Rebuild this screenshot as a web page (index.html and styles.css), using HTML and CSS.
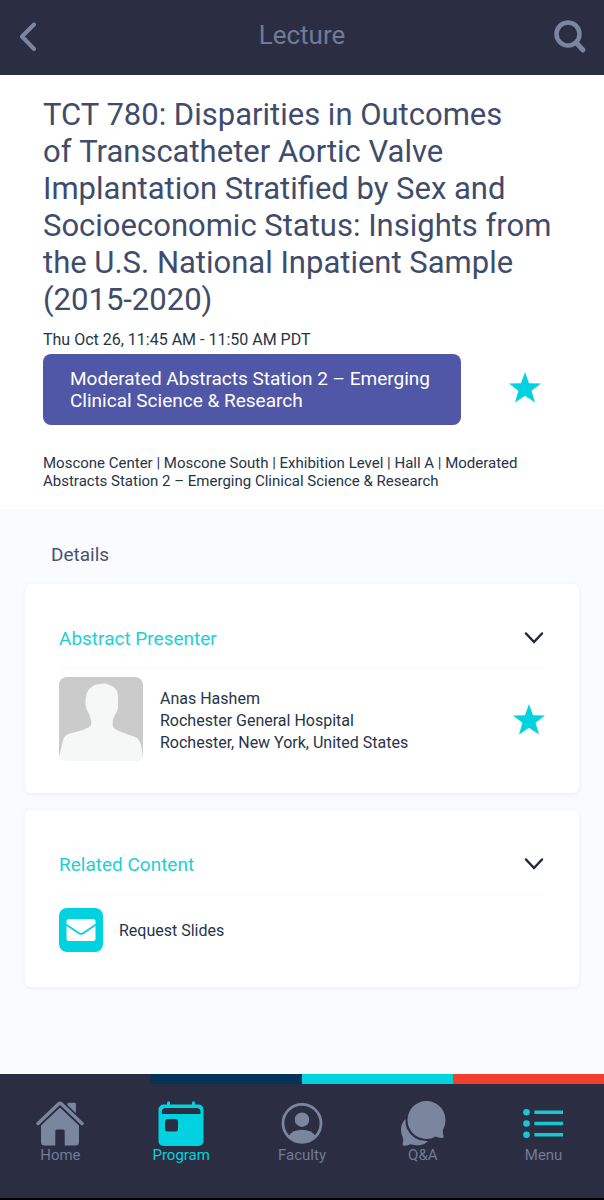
FILE: index.html
```html
<!DOCTYPE html>
<html lang="en">
<head>
  <meta charset="UTF-8" />
  <meta name="viewport" content="width=device-width, initial-scale=1.0"/>
  <title>Lecture</title>
  <link rel="stylesheet" href="styles.css">
</head>
<body>
  <header class="topbar">
    <button class="icon-btn" aria-label="Back">
      <svg width="20" height="32" viewBox="0 0 20 32" fill="none" stroke="currentColor" stroke-width="4" stroke-linecap="round" stroke-linejoin="round"><path d="M17 2.500 5 14.500l12 12.500"/></svg>
    </button>
    <h1 class="topbar-title">Lecture</h1>
    <button class="icon-btn" aria-label="Search">
      <svg width="34" height="36" viewBox="0 -2 34 36" fill="none" stroke="currentColor" stroke-linecap="round"><circle cx="15" cy="12" r="11.500" stroke-width="4.500"/><path d="m23.500 21 6.500 7" stroke-width="5"/></svg>
    </button>
  </header>

  <main class="content">
    <section class="lecture">
      <h2 class="lecture-title">TCT 780: Disparities in Outcomes of&nbsp;Transcatheter Aortic Valve Implantation Stratified by Sex and Socioeconomic Status: Insights from the U.S. National Inpatient Sample (2015-2020)</h2>
      <p class="lecture-time">Thu Oct 26, 11:45 AM - 11:50 AM PDT</p>
      <div class="session">
        <a class="session-link" href="#">Moderated Abstracts Station 2 – Emerging Clinical Science &amp; Research</a>
        <button class="star-btn" aria-label="Favorite lecture">
          <svg width="32" height="31" viewBox="0 0 32 31" fill="currentColor"><path d="M16 0 20 11.2 32 11.5 22.6 18.8 26 30.5 16 23.8 6 30.5 9.4 18.8 0 11.5 12 11.2z"/></svg>
        </button>
      </div>
      <p class="lecture-place">Moscone Center | Moscone South | Exhibition Level | Hall A | Moderated Abstracts Station 2 – Emerging Clinical Science &amp; Research</p>
    </section>

    <section class="details">
      <h3 class="details-title">Details</h3>

      <article class="card">
        <button class="card-head" aria-expanded="true">
          Abstract Presenter
          <svg class="chevron" width="22" height="14" viewBox="0 0 22 14"><path d="m3 2.500 8 8.500 8-8.500"/></svg>
        </button>
        <div class="presenter">
          <svg class="avatar" width="84" height="84" viewBox="0 0 84 84" role="img" aria-label="Anas Hashem">
            <rect width="84" height="84" fill="#cbcbcb"/>
            <path fill="#f6f8f8" d="M0 84C1 76 3 66 5 61c1-3 4-4 8-5 8-2 18-5 19-8 1-4-1-9-3-13-3-5-3-10-2-15C28 11 35 7 42 7c4-1 7 0 8 1 6 1 9 6 9 12v10c0 5-4 8-5 13-1 6 0 8 4 10 7 4 15 5 20 8 4 3 6 14 6 23z"/>
          </svg>
          <p class="presenter-info">Anas Hashem<br>Rochester General Hospital<br>Rochester, New York, United States</p>
          <button class="star-btn" aria-label="Favorite presenter">
            <svg width="32" height="31" viewBox="0 0 32 31" fill="currentColor"><path d="M16 0 20 11.2 32 11.5 22.6 18.8 26 30.5 16 23.8 6 30.5 9.4 18.8 0 11.5 12 11.2z"/></svg>
          </button>
        </div>
      </article>

      <article class="card">
        <button class="card-head" aria-expanded="true">
          Related Content
          <svg class="chevron" width="22" height="14" viewBox="0 0 22 14"><path d="m3 2.500 8 8.500 8-8.500"/></svg>
        </button>
        <a class="related" href="#">
          <svg width="44" height="44" viewBox="0 0 44 44">
            <rect width="44" height="44" rx="8" fill="#00d3df"/>
            <rect x="7.500" y="11" width="29" height="22" rx="2.500" fill="#fff"/>
            <path d="m7 16.500 12.500 8.500q2.500 1.600 5 0L37 16.500" fill="none" stroke="#00d3df" stroke-width="1.800"/>
          </svg>
          Request Slides
        </a>
      </article>
    </section>
  </main>

  <footer class="footer">
    <div class="stripes"><span></span><span class="navy"></span><span class="cyan"></span><span class="red"></span></div>
    <nav class="tabs">
      <a class="tab" href="#">
        <svg width="48" height="46" viewBox="0 0 48 46" fill="currentColor">
          <path d="M31.500 8V4q0-1.200 1.200-1.200h6q1.200 0 1.200 1.200v16z"/>
          <path d="M24 7.500 43 25.500V42q0 3.500-3.500 3.500H28.700V31q0-1.500-1.500-1.500h-6.400q-1.500 0-1.500 1.500v14.500H8.500Q5 45.500 5 42V25.500z"/>
          <path d="M2 23.500 22.500 4q1.500-1.400 3 0L46 23.500" fill="none" stroke="#2b2e43" stroke-width="6.500"/>
          <path d="M2 23.500 22.500 4q1.500-1.400 3 0L46 23.500" fill="none" stroke="currentColor" stroke-width="3.400" stroke-linecap="round"/>
        </svg>
        <span>Home</span>
      </a>
      <a class="tab active" href="#">
        <svg width="48" height="46" viewBox="0 0 48 46" fill="currentColor">
          <rect x="1.500" y="4.500" width="45" height="41.500" rx="5"/>
          <rect x="10" y="1.300" width="3" height="6" rx="1.500"/>
          <rect x="35" y="1.300" width="3" height="6" rx="1.500"/>
          <path d="M4.800 14v-2q0-4 4-4h30.700q4 0 4 4v2z" fill="#2b2e43"/>
          <rect x="8" y="19" width="13" height="12.500" rx="2.500" fill="#2b2e43"/>
        </svg>
        <span>Program</span>
      </a>
      <a class="tab" href="#">
        <svg width="48" height="46" viewBox="0 0 48 46" fill="currentColor">
          <circle cx="24" cy="23.300" r="19" fill="none" stroke="currentColor" stroke-width="2.800"/>
          <circle cx="24" cy="19.700" r="7.200"/>
          <path d="M10.500 36Q15 29.700 24 29.700T37.500 36Q32 43 24 43T10.500 36z"/>
        </svg>
        <span>Faculty</span>
      </a>
      <a class="tab" href="#">
        <svg width="48" height="46" viewBox="0 0 48 46" fill="currentColor">
          <path d="M6.500 19Q2 23 2 30q0 4 1.800 7.200Q5 40 3.600 44q-.4 1.700 1.400 1.700 3 0 6.500-1.500 5 1.800 10 .8 5-1 7.500-4Q15 42 8 29 6 24 6.500 19z"/>
          <path d="M27.500 1a19 19 0 0 1 19 19q0 5-2.300 9.300-1 2 .4 6.700.6 2.200-1.600 2-3.500-.4-6.500-1.600-4 2.600-9 2.600a19 19 0 0 1 0-38z"/>
        </svg>
        <span>Q&amp;A</span>
      </a>
      <a class="tab" href="#">
        <svg class="menu-icon" width="48" height="46" viewBox="0 0 48 46" fill="currentColor">
          <circle cx="6.500" cy="12.300" r="3.300"/><circle cx="6.500" cy="23.500" r="3.300"/><circle cx="6.500" cy="34.700" r="3.300"/>
          <path d="M14.400 10.500H43V14H14.400zM14.400 21.800H43v3.500H14.400zM14.400 33H43v3.500H14.400z"/>
        </svg>
        <span>Menu</span>
      </a>
    </nav>
  </footer>
</body>
</html>
```

FILE: styles.css
```css
* {
  margin: 0;
  padding: 0;
  box-sizing: border-box;
}

body {
  min-height: 100vh;
  display: flex;
  flex-direction: column;
  font-family: Roboto, sans-serif;
  font-size: 16px;
  color: #263449;
  background: #fafbff;
}

button {
  font: inherit;
  color: inherit;
  background: none;
  border: none;
  cursor: pointer;
}

a {
  color: inherit;
  text-decoration: none;
}

svg {
  display: block;
  flex-shrink: 0;
}

/* Top bar */
.topbar {
  display: grid;
  grid-template-columns: 1fr auto 1fr;
  align-items: center;
  height: 75px;
  padding: 0 17px;
  background: #2b2e43;
  color: #7985a1;
}

.topbar-title {
  font-size: 26px;
  font-weight: 400;
  line-height: 30px;
  padding-bottom: 5px;
  color: #707b96;
}

.icon-btn {
  justify-self: start;
}

.icon-btn:last-child {
  justify-self: end;
}

/* Lecture */
.content {
  flex: 1;
}

.lecture {
  padding: 21px 43px 19px;
  background: #fff;
}

.lecture-title {
  font-size: 31px;
  font-weight: 400;
  line-height: 37px;
  color: #3f4c6b;
}

.lecture-time {
  padding: 11px 0 3px;
  line-height: 22px;
}

.session {
  display: flex;
  align-items: center;
  justify-content: space-between;
  padding-right: 20px;
}

.session-link {
  width: 418px;
  padding: 14px 27px 13px;
  border-radius: 8px;
  background: #5157a7;
  color: #fff;
  font-size: 19px;
  line-height: 22px;
}

.star-btn {
  color: #00d3df;
}

.session .star-btn {
  padding-bottom: 4px;
}

.lecture-place {
  margin-top: 29px;
  font-size: 15px;
  line-height: 18px;
}

/* Details */
.details {
  padding: 35px 25px 34px;
}

.details-title {
  padding-left: 26px;
  margin-bottom: 18px;
  font-size: 19px;
  font-weight: 400;
  line-height: 22px;
  color: #4a5272;
}

.card {
  margin-bottom: 17px;
  padding: 24px 34px 32px;
  border-radius: 6px;
  background: #fff;
  box-shadow: 0 1px 4px rgba(60, 70, 110, 0.08);
}

.card-head {
  display: flex;
  align-items: center;
  justify-content: space-between;
  width: 100%;
  height: 60px;
  padding-top: 1px;
  border-bottom: 1px solid #fafafc;
  color: #1fcfd3;
  font-size: 19px;
}

.chevron {
  fill: none;
  stroke: #1d2a3f;
  stroke-width: 2.5;
  stroke-linecap: round;
}

.presenter {
  display: flex;
  align-items: center;
  gap: 17px;
  padding-top: 9px;
}

.avatar {
  border-radius: 8px;
}

.presenter-info {
  flex: 1;
  padding-top: 4px;
  line-height: 22px;
}

.related {
  display: flex;
  align-items: center;
  gap: 16px;
  padding: 14px 0 3px;
}

/* Bottom navigation */
.footer {
  background: #2b2e43;
  border-bottom: 2px solid #000;
}

.stripes {
  display: grid;
  grid-template-columns: repeat(4, 1fr);
  height: 10px;
}

.navy {
  background: #03335a;
}

.cyan {
  background: #00d3df;
}

.red {
  background: #f23f2e;
}

.tabs {
  display: grid;
  grid-template-columns: repeat(5, 1fr);
  padding: 16px 0 34px;
}

.tab {
  display: flex;
  flex-direction: column;
  align-items: center;
  color: #7a859e;
  font-size: 15px;
  line-height: 18px;
}

.tab span {
  color: #707b94;
}

.tab.active,
.tab.active span {
  color: #00d3df;
}

.menu-icon {
  color: #14c9d4;
}
```
